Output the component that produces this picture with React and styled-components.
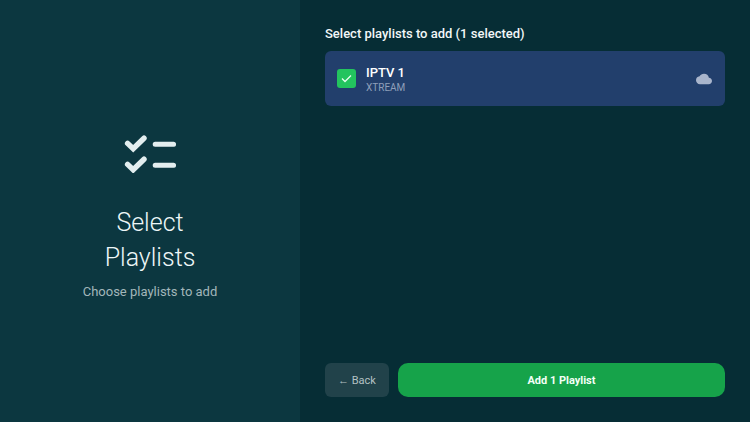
import React, { useState } from "react";
import styled, { createGlobalStyle } from "styled-components";
import { MdCloud } from "react-icons/md";

const GlobalStyle = createGlobalStyle`
  *, *::before, *::after { box-sizing: border-box; }
  body {
    margin: 0;
    background: #062d35;
    font-family: Roboto, "Noto Sans", sans-serif;
  }
  h1, h2, p { margin: 0; }
  button { font-family: inherit; cursor: pointer; }
`;

const Page = styled.div`
  display: grid;
  grid-template-columns: 2fr 3fr;
  min-height: 100vh;
`;

const Intro = styled.aside`
  display: flex;
  flex-direction: column;
  align-items: center;
  justify-content: center;
  padding: 38px 24px 24px;
  background: #0c3740;
  text-align: center;
`;

const ChecklistIcon = styled.svg`
  width: 52px;
  height: 38px;
  margin-bottom: 32px;
  fill: none;
  stroke: #e3eeef;
  stroke-linecap: round;
`;

const Title = styled.h1`
  max-width: 120px;
  color: #edf6f7;
  font-size: 25px;
  font-weight: 300;
  line-height: 35px;
`;

const Subtitle = styled.p`
  margin-top: 8px;
  color: #a2b6ba;
  font-size: 13px;
  line-height: 18px;
`;

const Content = styled.main`
  display: flex;
  flex-direction: column;
  padding: 25px;
`;

const Heading = styled.h2`
  margin-bottom: 8px;
  color: #f2f7f8;
  font-size: 13px;
  font-weight: 500;
  line-height: 18px;
`;

const PlaylistRow = styled.label`
  display: flex;
  align-items: center;
  gap: 10px;
  padding: 12px 13px 12px 12px;
  border-radius: 6px;
  background: ${({ $selected }) => ($selected ? "#223f6c" : "#1b414a")};
  cursor: pointer;
`;

const CheckField = styled.span`
  display: grid;
  place-items: center;
  width: 19px;
  height: 19px;

  > * { grid-area: 1 / 1; }
`;

const Checkbox = styled.input`
  appearance: none;
  width: 100%;
  height: 100%;
  margin: 0;
  border-radius: 3px;
  background: #4a6480;
  cursor: pointer;

  &:checked { background: #23c45e; }
`;

const Tick = styled.svg`
  width: 11px;
  height: 9px;
  fill: none;
  stroke: #e8fff0;
  stroke-width: 1.3;
  pointer-events: none;
`;

const PlaylistText = styled.span`
  display: flex;
  flex: 1;
  flex-direction: column;
`;

const PlaylistName = styled.span`
  color: #ffffff;
  font-size: 13px;
  font-weight: 500;
  line-height: 19px;
`;

const PlaylistType = styled.span`
  color: #8f9fba;
  font-size: 10px;
  line-height: 12px;
`;

const CloudIcon = styled(MdCloud)`
  width: 16px;
  height: 16px;
  color: #a9b5cc;
`;

const Actions = styled.div`
  display: flex;
  gap: 9px;
  margin-top: auto;
`;

const Button = styled.button`
  flex: ${({ $primary }) => ($primary ? "1" : "none")};
  height: 34px;
  padding: 0 13px;
  border: 0;
  border-radius: ${({ $primary }) => ($primary ? "10px" : "6px")};
  background: ${({ $primary }) => ($primary ? "#16a34a" : "#21424a")};
  color: ${({ $primary }) => ($primary ? "#f3fff7" : "#b4c1c4")};
  font-size: 11px;
  font-weight: ${({ $primary }) => ($primary ? 700 : 400)};
`;

export default function App() {
  const [selected, setSelected] = useState(true);
  const count = selected ? 1 : 0;

  return (
    <>
      <GlobalStyle />
      <Page>
        <Intro>
          <ChecklistIcon viewBox="0 0 52 38" aria-hidden="true">
            <path
              d="M3.6 8.4 9.2 13.8 20 3.2M3.6 29.4 9.2 34.8 20 24.2"
              strokeWidth="5.4"
            />
            <path d="M31.2 9.3H49.6M31.2 30.3H49.6" strokeWidth="5" />
          </ChecklistIcon>
          <Title>Select Playlists</Title>
          <Subtitle>Choose playlists to add</Subtitle>
        </Intro>
        <Content>
          <Heading>Select playlists to add ({count} selected)</Heading>
          <PlaylistRow $selected={selected}>
            <CheckField>
              <Checkbox
                type="checkbox"
                checked={selected}
                onChange={(event) => setSelected(event.target.checked)}
              />
              {selected && (
                <Tick viewBox="0 0 11 9" aria-hidden="true">
                  <path d="M1 4.5 4 7.5 10 1.5" />
                </Tick>
              )}
            </CheckField>
            <PlaylistText>
              <PlaylistName>IPTV 1</PlaylistName>
              <PlaylistType>XTREAM</PlaylistType>
            </PlaylistText>
            <CloudIcon aria-hidden="true" />
          </PlaylistRow>
          <Actions>
            <Button type="button">← Back</Button>
            <Button type="button" $primary disabled={!selected}>
              Add {count} Playlist
            </Button>
          </Actions>
        </Content>
      </Page>
    </>
  );
}
